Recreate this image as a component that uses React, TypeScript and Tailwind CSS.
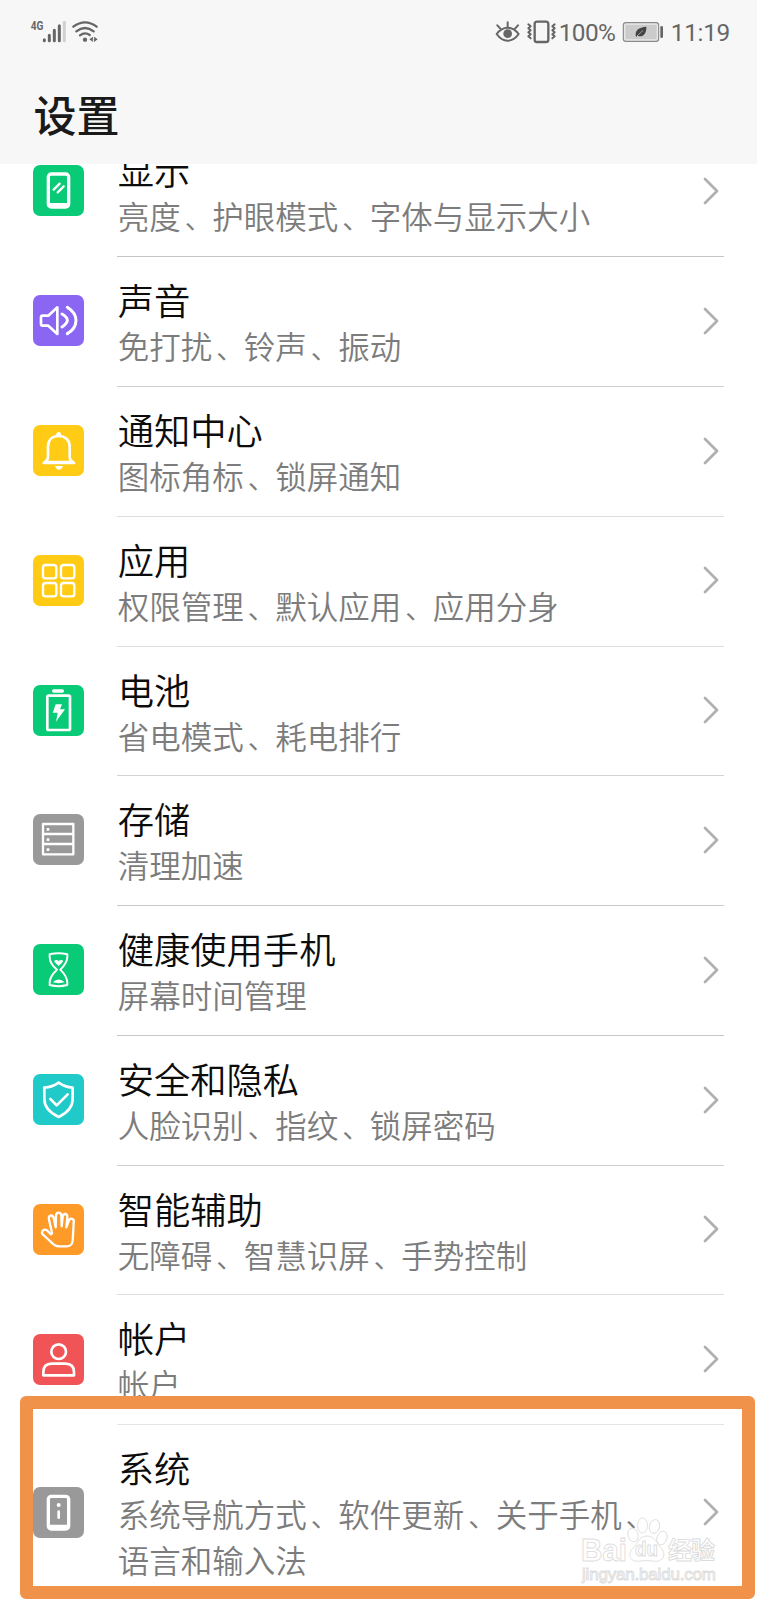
import type { ReactNode } from 'react';

type Item = {
  title: string;
  desc: string;
  tile: string;
  line: string;
  icon: ReactNode;
};

const items: Item[] = [
  {
    title: '显示',
    desc: '亮度、护眼模式、字体与显示大小',
    tile: 'bg-[#09ca77]',
    line: 'bg-[#c4c4c4]',
    icon: (
      <>
        <rect x="46" y="27" width="61" height="99" rx="9" strokeWidth="10" />
        <path d="M48 120H105" strokeWidth="12" />
        <path d="M62 74L80 56M74 82L92 64" strokeWidth="7" />
      </>
    ),
  },
  {
    title: '声音',
    desc: '免打扰、铃声、振动',
    tile: 'bg-[#8a66f2]',
    line: 'bg-[#cfcfcf]',
    icon: (
      <>
        <path d="M29 62H46L73 37V117L46 92H29Q24 92 24 87V67Q24 62 29 62Z" strokeWidth="8" />
        <path d="M87 57Q103 66 103 76T87 96M103 37C123 50 129 65 129 76C129 91 121 106 103 116" strokeWidth="9" />
      </>
    ),
  },
  {
    title: '通知中心',
    desc: '图标角标、锁屏通知',
    tile: 'bg-[#ffcb15]',
    line: 'bg-[#dedede]',
    icon: (
      <>
        <path d="M35 111C43 108 45 103 45 94V65C45 45 58 33 77 33S110 45 110 65V94C110 103 112 108 120 111Z" strokeWidth="8" />
        <path d="M32 114H123" strokeWidth="8" />
        <circle cx="77" cy="28" r="7" fill="currentColor" stroke="none" />
        <path d="M66 123H90Q86 134 78 134T66 123Z" fill="currentColor" stroke="none" />
      </>
    ),
  },
  {
    title: '应用',
    desc: '权限管理、默认应用、应用分身',
    tile: 'bg-[#ffcb15]',
    line: 'bg-[#dcdcdc]',
    icon: (
      <g strokeWidth="7">
        <rect x="30" y="30" width="40" height="40" rx="8" />
        <rect x="84" y="30" width="40" height="40" rx="8" />
        <rect x="30" y="84" width="40" height="40" rx="8" />
        <rect x="84" y="84" width="40" height="40" rx="8" />
      </g>
    ),
  },
  {
    title: '电池',
    desc: '省电模式、耗电排行',
    tile: 'bg-[#09ca77]',
    line: 'bg-[#d2d2d2]',
    icon: (
      <>
        <rect x="43" y="32" width="68" height="103" rx="4" strokeWidth="8" />
        <path d="M62 18H88" strokeWidth="10" />
        <path d="M68 58H87L81 73H96L69 110L74 83H59Z" fill="currentColor" stroke="none" />
      </>
    ),
  },
  {
    title: '存储',
    desc: '清理加速',
    tile: 'bg-[#999999]',
    line: 'bg-[#c9c9c9]',
    icon: (
      <>
        <path d="M30 30H121V121H30ZM30 60H121M30 90H121" strokeWidth="7" />
        <path d="M41 42h8v8h-8zM41 73h8v8h-8zM41 103h8v8h-8z" fill="currentColor" stroke="none" />
      </>
    ),
  },
  {
    title: '健康使用手机',
    desc: '屏幕时间管理',
    tile: 'bg-[#09ca77]',
    line: 'bg-[#c6c6c6]',
    icon: (
      <>
        <path
          d="M50 31Q77 25 103 31V39C103 55 91 68 82 77C93 88 103 101 103 117V123Q77 130 50 123V117C50 101 60 88 72 77C61 68 50 55 50 39Z"
          strokeWidth="6"
        />
        <path d="M63 51Q70 45 77 51Q84 45 91 51Q87 58 77 66Q67 58 63 51ZM59 115Q77 98 95 115Q77 120 59 115Z" fill="currentColor" stroke="none" />
      </>
    ),
  },
  {
    title: '安全和隐私',
    desc: '人脸识别、指纹、锁屏密码',
    tile: 'bg-[#1fcac9]',
    line: 'bg-[#cfcfcf]',
    icon: (
      <>
        <path d="M77 26C91 36 105 40 119 41V75C119 101 102 117 77 129C52 117 34 101 34 75V41C49 40 63 36 77 26Z" strokeWidth="8" />
        <path d="M52 75L71 94L104 61" strokeWidth="8" />
      </>
    ),
  },
  {
    title: '智能辅助',
    desc: '无障碍、智慧识屏、手势控制',
    tile: 'bg-[#fd9a28]',
    line: 'bg-[#dedede]',
    icon: (
      <path
        d="M56 82L48 47C45 32 59 31 62 42L68 70L69 35C70 23 84 23 85 35L86 67L89 38C91 26 104 28 103 40L100 70L107 51C111 40 125 44 122 56L119 111C118 121 110 127 101 127H79C66 127 58 120 51 111L30 92C22 83 33 72 43 80L54 91Q59 91 56 82Z"
        strokeWidth="7"
      />
    ),
  },
  {
    title: '帐户',
    desc: '帐户',
    tile: 'bg-[#f05456]',
    line: 'bg-[#e4e4e4]',
    icon: (
      <>
        <circle cx="77" cy="53" r="22" strokeWidth="8" />
        <path d="M31 124V115Q31 89 56 89H97Q123 89 123 115V124Z" strokeWidth="8" />
      </>
    ),
  },
];

function Tile({ color, children }: { color: string; children: ReactNode }) {
  return (
    <div className={`size-[51px] shrink-0 overflow-hidden rounded-[7px] text-white ${color}`}>
      <svg viewBox="0 0 153 153" className="size-full" fill="none" stroke="currentColor" strokeLinecap="round" strokeLinejoin="round">
        {children}
      </svg>
    </div>
  );
}

function Chevron() {
  return (
    <svg viewBox="0 0 16 28" className="h-7 w-4 shrink-0" fill="none" stroke="#b0b0b0" strokeWidth="2.8" strokeLinecap="round" strokeLinejoin="round">
      <path d="M2 2L14 14L2 26" />
    </svg>
  );
}

// the enumeration comma sits closer to the middle of its cell
function Desc({ text }: { text: string }) {
  return text.split(/(、)/).map((part, i) =>
    part === '、' ? (
      <span key={i} className="pl-[4px] text-[27.5px] leading-none">
        {part}
      </span>
    ) : (
      part
    )
  );
}

function Row({ item }: { item: Item }) {
  return (
    <li className="flex h-[129.8px] pl-[33px] pr-[33px]">
      <div className="flex h-[127.2px] items-center">
        <Tile color={item.tile}>{item.icon}</Tile>
      </div>
      <div className="relative ml-[33px] flex min-w-0 flex-1">
        <div className="flex-1 whitespace-nowrap pt-[19px] pl-[0.7px]">
          <div className="text-[36.3px] font-[350] leading-[46px] text-[#0c0c0c]">{item.title}</div>
          <div className="text-[31.5px] font-[350] leading-[46px] text-[#7c7c7c]">
            <Desc text={item.desc} />
          </div>
        </div>
        <div className="flex h-[127.4px] items-center pr-[5px]">
          <Chevron />
        </div>
        <div className={`absolute bottom-0 left-0 right-0 h-px ${item.line}`} />
      </div>
    </li>
  );
}

function StatusBar() {
  return (
    <div className="flex h-16 items-center pl-[30px] pr-[27px] font-normal text-[#666]">
      <svg viewBox="90 60 210 72" className="h-6 w-[70px] overflow-visible" fill="none" stroke="currentColor" strokeLinecap="round">
        <text x="92" y="91" fontSize="38" fontFamily="Roboto" fontWeight="700" textLength="38" lengthAdjust="spacingAndGlyphs" fill="currentColor" stroke="none">
          4G
        </text>
        <path d="M133 119V122M148 106V122M163 91V122M178 77V122" strokeWidth="9" />
        <path d="M193 67V122" stroke="#d0d0d0" strokeWidth="9" />
        <path d="M220 80Q255 54 290 80M229 94Q255 74 281 94M240 106Q255 95 269 105" strokeWidth="7" />
        <circle cx="255" cy="119" r="6.5" fill="currentColor" stroke="none" />
        <path d="M268 118L278 111V125ZM293 118L283 111V125Z" fill="currentColor" stroke="none" />
        <path d="M278 112V124M284 112V124" strokeWidth="2" />
      </svg>
      <div className="flex-1" />
      <svg viewBox="46 60 186 72" className="h-6 w-[62px]" fill="none" stroke="currentColor" strokeLinecap="round" strokeLinejoin="round">
        <path d="M51 102Q65 83 84 83T117 102Q103 122 84 122T51 102Z" strokeWidth="6" />
        <circle cx="84" cy="101" r="13" fill="currentColor" stroke="none" />
        <path d="M84 67V81M53 76L62 86M115 76L106 86" strokeWidth="6" />
        <rect x="165" y="65" width="41" height="61" rx="7" strokeWidth="7" />
        <path
          d="M146 73L153 79L146 85L153 91L146 97L153 103L146 109L153 115M225 73L218 79L225 85L218 91L225 97L218 103L225 109L218 115"
          strokeWidth="6"
        />
      </svg>
      <span className="ml-[2px] w-[59px] whitespace-nowrap pt-px font-[Roboto] text-[24.4px] leading-8 tracking-[-0.6px]">100%</span>
      <svg viewBox="428 60 126 72" className="ml-1 h-6 w-[42px]" fill="none" stroke="currentColor">
        <rect x="432" y="68" width="106" height="56" rx="8" fill="#e8e8e8" stroke="#8a8a8a" strokeWidth="3.5" />
        <rect x="438" y="74" width="94" height="44" rx="2" fill="#cbcbcb" stroke="none" />
        <path d="M547 82V110" strokeWidth="8" strokeLinecap="round" />
        <path d="M470 111C465 90 479 82 501 80C502 101 490 114 474 107Z" fill="#444" stroke="none" />
        <path d="M473 108L491 91" stroke="#cbcbcb" strokeWidth="2" />
      </svg>
      <span className="ml-[7px] whitespace-nowrap pt-px font-[Roboto] text-[24.4px] leading-8 tracking-[-0.3px]">11:19</span>
    </div>
  );
}

function Watermark() {
  return (
    <div className="absolute left-[581px] top-[1517px] h-[68px] w-[140px]">
      <svg viewBox="0 0 140 68" className="size-full overflow-visible" fill="#fff" stroke="#dcdcdc" fillOpacity="0.8" strokeWidth="0.9">
        <ellipse cx="52" cy="18" rx="5" ry="7" transform="rotate(-15 52 18)" />
        <ellipse cx="61.5" cy="8.5" rx="5" ry="7.5" />
        <ellipse cx="73.5" cy="9.5" rx="5" ry="7" transform="rotate(15 73.5 9.5)" />
        <ellipse cx="81" cy="21" rx="5" ry="7" transform="rotate(20 81 21)" />
        <path d="M66 19C74 19 76 27 80 31C87 39 80 46 72 44Q66 43 59 44C49 46 46 37 52 31C57 27 58 19 66 19Z" />
        <g fontFamily="Liberation Sans" fontWeight="700">
          <text x="0" y="43.5" fontSize="32" textLength="46" lengthAdjust="spacingAndGlyphs">Bai</text>
          <text x="54" y="39" fontSize="20" textLength="23" lengthAdjust="spacingAndGlyphs">du</text>
          <text x="1" y="63" fontSize="17" fontWeight="400" textLength="134">jingyan.baidu.com</text>
        </g>
        <text x="87" y="42" fontSize="24" fontWeight="700" fontFamily="Noto Sans CJK SC" textLength="47">经验</text>
      </svg>
    </div>
  );
}

export default function App() {
  return (
    <div className="relative flex h-[1600px] w-[757px] flex-col overflow-hidden bg-white font-['Noto_Sans_CJK_SC',sans-serif]">
      <header className="h-[164px] shrink-0 bg-[#f7f7f7]">
        <StatusBar />
        <h1 className="pl-[33.5px] pt-[17px] text-[43px] font-medium leading-[64px] text-[#1a1a1a]">设置</h1>
      </header>

      <main className="min-h-0 flex-1 overflow-hidden">
        <ul className="-mt-[36.7px]">
          {items.map((item) => (
            <Row key={item.title} item={item} />
          ))}
          <li className="flex pl-[33px] pr-[38px]">
            <div className="flex h-[174px] items-center">
              <Tile color="bg-[#999999]">
                <rect x="46" y="28" width="61" height="98" rx="9" strokeWidth="10" />
                <path d="M48 119H105" strokeWidth="12" />
                <path d="M77 74V92" strokeWidth="8" />
                <circle cx="77" cy="54" r="6" fill="currentColor" stroke="none" />
              </Tile>
            </div>
            <div className="ml-[33px] flex-1 whitespace-nowrap pt-[19px] pl-[0.7px]">
              <div className="text-[36.3px] font-[350] leading-[46px] text-[#0c0c0c]">系统</div>
              <div className="text-[31.5px] font-[350] leading-[46px] text-[#7c7c7c]">
                <Desc text="系统导航方式、软件更新、关于手机、" />
                <br />
                语言和输入法
              </div>
            </div>
            <div className="flex h-[174px] items-center">
              <Chevron />
            </div>
          </li>
        </ul>
      </main>

      <Watermark />

      {/* highlight around the system entry */}
      <div className="absolute left-[20px] top-[1396px] h-[203px] w-[735px] rounded-[6px] border-[13px] border-[#f1924a]" />
    </div>
  );
}
